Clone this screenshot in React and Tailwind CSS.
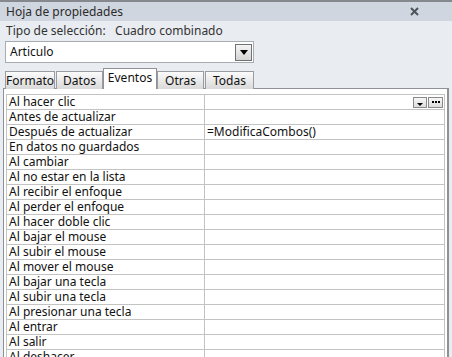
import React from "react";

const rows = [
  "Al hacer clic",
  "Antes de actualizar",
  "Después de actualizar",
  "En datos no guardados",
  "Al cambiar",
  "Al no estar en la lista",
  "Al recibir el enfoque",
  "Al perder el enfoque",
  "Al hacer doble clic",
  "Al bajar el mouse",
  "Al subir el mouse",
  "Al mover el mouse",
  "Al bajar una tecla",
  "Al subir una tecla",
  "Al presionar una tecla",
  "Al entrar",
  "Al salir",
  "Al deshacer",
];

const values = { "Después de actualizar": "=ModificaCombos()" };

function Tab({ label, active, className }) {
  if (active) {
    return (
      <div
        className={`relative z-10 flex h-[21px] items-start justify-center border border-b-0 border-[#8e9197] bg-white pt-[2px] ${className}`}
      >
        {label}
      </div>
    );
  }
  return (
    <div
      className={`flex h-[18px] items-center justify-center border border-b-0 border-[#9a9ca1] bg-gradient-to-b from-[#fbfbfb] to-[#d9d9d9] pt-[1px] ${className}`}
    >
      {label}
    </div>
  );
}

export default function App() {
  return (
    <div className="h-[357px] w-[452px] overflow-hidden bg-[#e9ecf1] font-['Noto_Sans',sans-serif] text-[12px] leading-[14px] text-[#111]">
      <div className="h-[2px] bg-[#85888d]" />
      <div className="flex h-[19px] items-center justify-between bg-[#cfd6df] pl-[6px] pr-[33px] text-[#2b2b2b]">
        <span>Hoja de propiedades</span>
        <svg width="9" height="9" viewBox="0 0 9 9">
          <path d="M1 1 L8 8 M8 1 L1 8" stroke="#505459" strokeWidth="2" />
        </svg>
      </div>
      <div className="flex h-[20px] items-center pl-[6px] text-[#333]">
        Tipo de selección:&nbsp;&nbsp;&nbsp;Cuadro combinado
      </div>

      <div className="ml-[5px] flex h-[22px] w-[249px] items-center justify-between border border-[#a8abb0] bg-white pl-[4px] pr-[1px]">
        <span>Articulo</span>
        <div className="flex h-[17px] w-[17px] items-center justify-center border border-[#6f7277] bg-gradient-to-b from-[#f5f5f5] to-[#d4d4d4]">
          <svg width="8" height="5" viewBox="0 0 8 5">
            <path d="M0 0 H8 L4 5 Z" fill="#000" />
          </svg>
        </div>
      </div>

      <div className="mt-[5px] flex h-[21px] items-end pl-[5px]">
        <Tab label="Formato" className="w-[50px]" />
        <Tab label="Datos" className="ml-[1px] w-[47px]" />
        <Tab label="Eventos" active className="w-[54px]" />
        <Tab label="Otras" className="w-[47px]" />
        <Tab label="Todas" className="ml-[1px] w-[49px]" />
      </div>

      <div className="-mt-px ml-[3px] h-[300px] w-[446px] border border-r-2 border-[#8e9197] bg-white pl-[2px] pt-[5px]">
        <div className="w-[439px] border-l border-t border-r border-[#c3c3c3]">
          {rows.map((r, i) => (
            <div key={r} className="flex h-[15px] border-b border-[#c3c3c3]">
              <div className="flex w-[198px] items-center border-r border-[#c3c3c3] pl-[2px]">{r}</div>
              <div className="flex flex-1 items-center justify-between pl-[2px]">
                <span>{values[r] || ""}</span>
                {i === 0 && (
                  <div className="flex h-[11px] gap-[1px] pr-[1px]">
                    <div className="flex w-[14px] items-end justify-center border border-[#8a8a8a] bg-gradient-to-b from-[#f7f7f7] to-[#dcdcdc] pb-[1px]">
                      <svg width="6" height="3" viewBox="0 0 6 3">
                        <path d="M0 0 H6 L3 3 Z" fill="#000" />
                      </svg>
                    </div>
                    <div className="flex w-[15px] items-center justify-center gap-[1px] border border-[#8a8a8a] bg-gradient-to-b from-[#f7f7f7] to-[#dcdcdc]">
                      <span className="h-[2px] w-[2px] bg-black" />
                      <span className="h-[2px] w-[2px] bg-black" />
                      <span className="h-[2px] w-[2px] bg-black" />
                    </div>
                  </div>
                )}
              </div>
            </div>
          ))}
        </div>
      </div>
    </div>
  );
}
